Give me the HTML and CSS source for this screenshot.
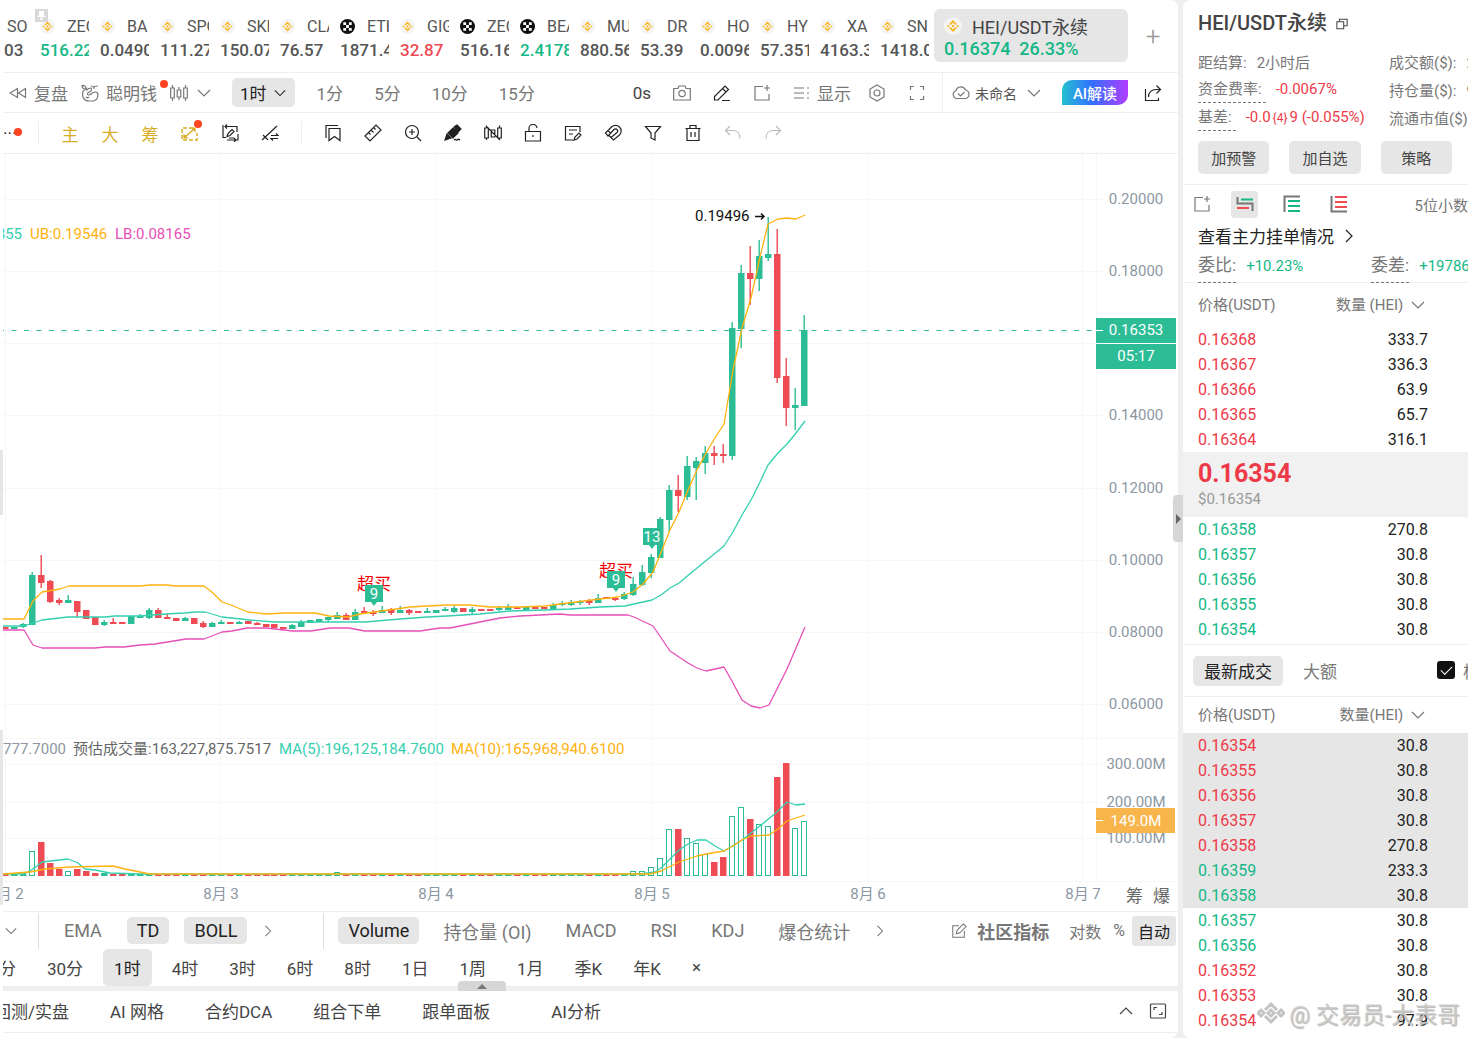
FILE: index.html
```html
<!DOCTYPE html>
<html lang="zh-CN">
<head>
    <meta charset="UTF-8">
    <meta name="viewport" content="width=device-width, initial-scale=1.0">
    <title>HEI/USDT永续</title>
    <link rel="stylesheet" href="styles.css">
</head>
<body>
    <svg class="sprite" aria-hidden="true">
        <symbol id="bnb" viewBox="0 0 16 16"><circle cx="8" cy="8" r="8" fill="#f4f4f4"/><path d="M5.3 6.6 8 3.9l2.7 2.7M5.3 9.4 8 12.1l2.7-2.7" fill="none" stroke="#f9b522" stroke-width="1.6"/><path d="m8 6.6 1.4 1.4L8 9.4 6.6 8zM3.8 6.8 5 8 3.8 9.2 2.6 8zM12.2 6.8 13.4 8l-1.2 1.2L11 8z" fill="#f9b522"/></symbol>
        <symbol id="okx" viewBox="0 0 16 16"><circle cx="8" cy="8" r="8" fill="#111"/><path d="M3.5 3.5h3v3h-3zM9.5 3.5h3v3h-3zM6.5 6.5h3v3h-3zM3.5 9.5h3v3h-3zM9.5 9.5h3v3h-3z" fill="#fff"/></symbol>
        <symbol id="pin" viewBox="0 0 13 13"><path d="M4 2h5v4l2 2H7.500v3h-2V8H2l2-2z" fill="#fff" stroke="none"/></symbol>
        <symbol id="chevron" viewBox="0 0 14 14"><path d="m1 4 6 6 6-6"/></symbol>
        <symbol id="next" viewBox="0 0 14 14"><path d="m4 1 6 6-6 6"/></symbol>
        <symbol id="rewind" viewBox="0 0 18 18"><path d="M8.500 4.500v9L1 9zM16.500 4.500v9L9.500 9z"/></symbol>
        <symbol id="whale" viewBox="0 0 18 18"><path d="M5 5c-3 1-4 4-3 8 1 3 3 4 6 4h4c3 0 5-3 5-6 0-2-1-3-3-3-3 0-4 3-6 3-2 0-2-2 0-3 2 0 3-2 2-4C8 4 7 4 6 6 5 3 4 1 1 1.500 1 3 2 5 5 5M13 5V4c0-1-1-2-3-2M13 4c0-1 1-2 4-2M5 13c1 1 2 1 3 0"/></symbol>
        <symbol id="candles" viewBox="0 0 18 18"><path d="M.7 4h3.600v10H.7zM7.200 6h3.600v7H7.200zM13.700 4h3.600v10h-3.600zM2.500 1v3M2.500 14v3M9 3v3M9 13v3M15.500 1v3M15.500 14v3"/></symbol>
        <symbol id="camera" viewBox="0 0 18 18"><path d="M.7 4.500H5l1-2.500h6l1 2.500h4.300v11.500H.7z"/><circle cx="9" cy="9.500" r="3.200"/></symbol>
        <symbol id="pen" viewBox="0 0 18 18"><path d="M1.500 16v-3.500L12 2l3.500 3.500L5 16zM9.500 4.500 13 8M9 16.500h8"/></symbol>
        <symbol id="addbox" viewBox="0 0 18 18"><path d="M10 2.500H2v13.500h14V10M14 1v6M11 4h6"/></symbol>
        <symbol id="list" viewBox="0 0 18 18"><path d="M1 4h10M1 9h10M1 14h10M14 4h2M14 9h2M14 14h2"/></symbol>
        <symbol id="hex" viewBox="0 0 18 18"><path d="m9 1 7 4v8l-7 4-7-4V5z"/><circle cx="9" cy="9" r="3"/></symbol>
        <symbol id="full" viewBox="0 0 18 18"><path d="M6 2.500H2.500V6M12 2.500h3.500V6M6 15.500H2.500V12M12 15.500h3.500V12"/></symbol>
        <symbol id="cloud" viewBox="0 0 18 18"><path d="M5 14.500a4 4 0 0 1-1-7.800 5 5 0 0 1 9.500-.7A4.300 4.300 0 0 1 13 14.500zM6 9.500l2.500 2.500 4-4"/></symbol>
        <symbol id="share" viewBox="0 0 18 18"><path d="M1.500 5v11.500h13V14M4.500 13c0-5 3-7.500 8-7.500h3.500M12.500 1.500l4 4-4 4"/></symbol>
        <symbol id="area" viewBox="0 0 18 18"><path d="M12 4H1v12h15V9" stroke-width="1.500" stroke-dasharray="4 2"/><path d="m4 13 9-8" stroke-width="1.500"/><path d="M11 4h3v3zM3 14v-3l3 3z" fill="currentColor"/></symbol>
        <symbol id="redo-doc" viewBox="0 0 18 18"><path d="M4 2.500h12V8M6 .5 4 2.500l2 2M2 1v12.500h3M6 16h11v-6M13 14l2 2-2 2M6 12.500l1-3 4-4 2 2-4 4zM8 14h5"/></symbol>
        <symbol id="trend" viewBox="0 0 18 18"><path d="m1 16 15-14M2 11l5 5M10 11.500h7l-2-2M17 14.500h-7l2 2"/></symbol>
        <symbol id="bookmark" viewBox="0 0 18 18"><path d="M5 4.500h11v12l-5.500-4-5.500 4zM2 14V1.500h12"/></symbol>
        <symbol id="ruler" viewBox="0 0 18 18"><path d="m1 12 11-11 5 5L6 17zM4.500 8.500l2 2M7 6l2.500 2.500M9.500 3.500l2 2"/></symbol>
        <symbol id="zoomin" viewBox="0 0 18 18"><circle cx="8" cy="8" r="6.500"/><path d="m13 13 4 4M5 8h6M8 5v6"/></symbol>
        <symbol id="marker" viewBox="0 0 18 18"><path d="m1 16 2-6 4 4zM4 9l5-5 5 5-5 5zM10 3l3-2 4 4-3 3z" fill="currentColor"/><path d="M10 16c2-2 2 1 3 0s2-1 3 0"/></symbol>
        <symbol id="nocandle" viewBox="0 0 18 18"><path d="M.7 4h3.600v10H.7zM7.200 6h3.600v7H7.200zM13.700 4h3.600v10h-3.600zM2.500 1.500V4M2.500 14v2M15.500 1.500V4M15.500 14v2M2 2l14 14"/></symbol>
        <symbol id="lock" viewBox="0 0 18 18"><path d="M1.500 7.500h15v9.500h-15zM5 7.500V5a4 4 0 0 1 8-1M9 11v2"/></symbol>
        <symbol id="note" viewBox="0 0 18 18"><path d="M16 8V2.500H1.500v13.500H9M5 6h8M5 10h4M10 16l1-3 4-4 2 2-4 4z"/></symbol>
        <symbol id="magnet" viewBox="0 0 18 18"><path d="m1.500 9 6-6a5.500 5.500 0 0 1 8 8l-6 5-2.500-2.500L13 8.500a2 2 0 0 0-3-3L4 12zM4 6.500l3 3M7 13.500l-2-2"/></symbol>
        <symbol id="filter" viewBox="0 0 18 18"><path d="M1.500 2.500h15L11 9v7l-4-2V9z"/></symbol>
        <symbol id="trash" viewBox="0 0 18 18"><path d="M1.500 4.500h15M6 4V1.500h6V4M3 4.500v12h12v-12M7 8v5M11 8v5"/></symbol>
        <symbol id="undo" viewBox="0 0 18 18"><path d="M6 2 1.500 6.500 6 11M1.500 6.500H9c5 0 7 4 7 8"/></symbol>
        <symbol id="edit" viewBox="0 0 18 18"><path d="M9 3H2v13h13V9M6 12l1-4 7-7 3 3-7 7z"/></symbol>
        <symbol id="expand" viewBox="0 0 18 18"><rect x="1.500" y="2" width="15" height="14" rx="1"/><path d="M5 8V5.500h3M13 10v2.500h-3"/></symbol>
        <symbol id="copy" viewBox="0 0 14 14"><path d="M1 4.500h8v8H1zM4 4V1.500h9V9H9"/></symbol>
        <symbol id="book-both" viewBox="0 0 18 18"><path d="M1.500 2v6.500h15V16" stroke="#777"/><path d="M5 4.500h12" stroke="#14b886"/><path d="M1 13h12" stroke="#ee4b55"/></symbol>
        <symbol id="book-buy" viewBox="0 0 18 18"><path d="M1.500 17V1.500H17" stroke="#777"/><path d="M5 6h12M5 11h12M5 16h12" stroke="#14b886"/></symbol>
        <symbol id="book-sell" viewBox="0 0 18 18"><path d="M1.500 1v15.500H17" stroke="#777"/><path d="M5 2h12M5 7h12M5 12h12" stroke="#ee4b55"/></symbol>
    </svg>

    <div class="workspace">
        <aside class="edge"><span class="edge-thumb"></span><span class="edge-thumb tall"></span></aside>

        <main class="main">
            <header class="tickers">
                <svg class="pin"><use href="#pin"/></svg>
                <div class="ticker-list" id="tickerList"></div>
                <div class="ticker-active">
                    <span class="ticker-head"><svg class="coin"><use href="#bnb"/></svg>HEI/USDT永续</span>
                    <span class="ticker-quote">0.16374&nbsp; 26.33%</span>
                </div>
                <button class="icon-btn add-tab" aria-label="添加">+</button>
            </header>

            <div class="toolbar">
                <button class="tool"><svg class="ic"><use href="#rewind"/></svg>复盘</button>
                <button class="tool"><svg class="ic"><use href="#whale"/></svg>聪明钱<i class="dot"></i></button>
                <button class="tool" aria-label="K线类型"><svg class="ic"><use href="#candles"/></svg><svg class="ic small"><use href="#chevron"/></svg></button>
                <button class="tool period">1时<svg class="ic tiny"><use href="#chevron"/></svg></button>
                <div class="quick">
                    <button>1分</button>
                    <button>5分</button>
                    <button>10分</button>
                    <button>15分</button>
                </div>
                <div class="toolbar-right">
                    <button class="dark">0s</button>
                    <button aria-label="截图"><svg class="ic"><use href="#camera"/></svg></button>
                    <button class="black" aria-label="画笔"><svg class="ic"><use href="#pen"/></svg></button>
                    <button aria-label="新增"><svg class="ic"><use href="#addbox"/></svg></button>
                    <button class="display"><svg class="ic"><use href="#list"/></svg>显示</button>
                    <button aria-label="设置"><svg class="ic"><use href="#hex"/></svg></button>
                    <button aria-label="全屏"><svg class="ic"><use href="#full"/></svg></button>
                </div>
                <div class="layout-tools">
                    <button class="layout-name"><svg class="ic"><use href="#cloud"/></svg><span>未命名</span><svg class="ic small"><use href="#chevron"/></svg></button>
                    <button class="ai">AI解读</button>
                    <button class="black" aria-label="分享"><svg class="ic"><use href="#share"/></svg></button>
                </div>
            </div>

            <div class="drawbar">
                <button class="more" aria-label="更多">···<i class="dot"></i></button>
                <div class="draw-group">
                    <button class="gold">主</button>
                    <button class="gold">大</button>
                    <button class="gold">筹</button>
                    <button class="gold" aria-label="区域"><svg class="ic"><use href="#area"/></svg><i class="dot"></i></button>
                    <button aria-label="同步画线"><svg class="ic"><use href="#redo-doc"/></svg></button>
                    <button aria-label="趋势线"><svg class="ic"><use href="#trend"/></svg></button>
                </div>
                <div class="draw-group">
                    <button aria-label="书签"><svg class="ic"><use href="#bookmark"/></svg></button>
                    <button aria-label="测量"><svg class="ic"><use href="#ruler"/></svg></button>
                    <button aria-label="放大"><svg class="ic"><use href="#zoomin"/></svg></button>
                    <button aria-label="标记"><svg class="ic"><use href="#marker"/></svg></button>
                    <button aria-label="隐藏K线"><svg class="ic"><use href="#nocandle"/></svg></button>
                    <button aria-label="锁定"><svg class="ic"><use href="#lock"/></svg></button>
                    <button aria-label="笔记"><svg class="ic"><use href="#note"/></svg></button>
                    <button aria-label="磁吸"><svg class="ic"><use href="#magnet"/></svg></button>
                    <button aria-label="筛选"><svg class="ic"><use href="#filter"/></svg></button>
                    <button aria-label="删除"><svg class="ic"><use href="#trash"/></svg></button>
                    <button class="off" aria-label="撤销"><svg class="ic"><use href="#undo"/></svg></button>
                    <button class="off" aria-label="重做"><svg class="ic flip"><use href="#undo"/></svg></button>
                </div>
            </div>

            <section class="chart">
                <svg id="chart" viewBox="3 154 1175 757" preserveAspectRatio="xMinYMin meet"></svg>
                <div class="axis-tools"><button>筹</button><button>爆</button></div>
            </section>

            <div class="indicators">
                <button class="fold" aria-label="收起"><svg class="ic tiny"><use href="#chevron"/></svg></button>
                <div class="ind-group main-ind">
                    <button>EMA</button>
                    <button class="on">TD</button>
                    <button class="on">BOLL</button>
                    <button class="nav" aria-label="更多主图指标"><svg class="ic tiny"><use href="#next"/></svg></button>
                </div>
                <div class="ind-group sub-ind">
                    <button class="on">Volume</button>
                    <button>持仓量 (OI)</button>
                    <button>MACD</button>
                    <button>RSI</button>
                    <button>KDJ</button>
                    <button>爆仓统计</button>
                    <button class="nav" aria-label="更多副图指标"><svg class="ic tiny"><use href="#next"/></svg></button>
                </div>
                <div class="scale-tools">
                    <button class="community"><svg class="ic"><use href="#edit"/></svg>社区指标</button>
                    <button>对数</button>
                    <button>%</button>
                    <button class="auto">自动</button>
                </div>
            </div>

            <div class="intervals">
                <button class="cut">15分</button>
                <button>30分</button>
                <button class="on">1时</button>
                <button>4时</button>
                <button>3时</button>
                <button>6时</button>
                <button>8时</button>
                <button>1日</button>
                <button>1周</button>
                <button>1月</button>
                <button>季K</button>
                <button>年K</button>
                <button aria-label="关闭">×</button>
            </div>

            <div class="splitter"><button class="pull" aria-label="展开面板"></button></div>

            <nav class="panels">
                <a class="cut" href="#">回测/实盘</a>
                <a href="#">AI 网格</a>
                <a href="#">合约DCA</a>
                <a href="#">组合下单</a>
                <a href="#">跟单面板</a>
                <a class="last" href="#">AI分析</a>
                <div class="panel-tools">
                    <button aria-label="展开"><svg class="ic small up"><use href="#chevron"/></svg></button>
                    <button aria-label="最大化"><svg class="ic"><use href="#expand"/></svg></button>
                </div>
            </nav>
        </main>

        <aside class="side">
            <button class="side-pull" aria-label="收起侧栏"></button>
            <div class="side-body">
                <h1>HEI/USDT永续 <svg class="ic tiny"><use href="#copy"/></svg></h1>
                <div class="info">
                    <p><span>距结算:</span><span>2小时后</span></p>
                    <p><span>成交额($):</span><span>2.1亿</span></p>
                    <p><span class="hint">资金费率:</span><span class="down">-0.0067%</span></p>
                    <p><span>持仓量($):</span><span>961万</span></p>
                    <p><span class="hint">基差:</span><span class="down">-0.0<small>{4}</small>9 (-0.055%)</span></p>
                    <p><span>流通市值($):</span></p>
                </div>
                <div class="actions">
                    <button>加预警</button>
                    <button>加自选</button>
                    <button>策略</button>
                </div>
                <div class="book-views">
                    <button aria-label="新窗口"><svg class="ic"><use href="#addbox"/></svg></button>
                    <button class="view on" aria-label="买卖盘"><svg class="ic thick"><use href="#book-both"/></svg></button>
                    <button class="view" aria-label="买盘"><svg class="ic thick"><use href="#book-buy"/></svg></button>
                    <button class="view" aria-label="卖盘"><svg class="ic thick"><use href="#book-sell"/></svg></button>
                    <button class="digits">5位小数</button>
                </div>
                <a class="orders-link" href="#">查看主力挂单情况<svg class="ic small"><use href="#next"/></svg></a>
                <div class="ratio">
                    <p><span class="hint">委比:</span><span class="up-text">+10.23%</span></p>
                    <p><span class="hint">委差:</span><span class="up-text">+19786</span></p>
                </div>

                <table class="book">
                    <thead><tr><th>价格(USDT)</th><th>数量 (HEI) <svg class="ic small"><use href="#chevron"/></svg></th></tr></thead>
                    <tbody id="asks"></tbody>
                </table>
                <div class="last-price"><strong>0.16354</strong><span>$0.16354</span></div>
                <table class="book bids"><tbody id="bids"></tbody></table>

                <div class="trade-tabs">
                    <button class="on">最新成交</button>
                    <button>大额</button>
                    <label><input type="checkbox" checked>极速</label>
                </div>
                <table class="book trades">
                    <thead><tr><th>价格(USDT)</th><th>数量(HEI) <svg class="ic small"><use href="#chevron"/></svg></th></tr></thead>
                    <tbody id="trades"></tbody>
                </table>
            </div>
            <div class="watermark"><svg viewBox="0 0 28 28"><path d="M8 11l6-6 6 6M8 17l6 6 6-6M14 11l3 3-3 3-3-3zM4 11l3 3-3 3-3-3zM24 11l3 3-3 3-3-3z"/></svg><span>@ 交易员-大表哥</span></div>
        </aside>
    </div>
    <script src="chart.js"></script>
</body>
</html>
```
FILE: styles.css
```css
* {
    box-sizing: border-box;
}
body {
    margin: 0;
    background: #efefef;
    color: #777;
    font-family: Roboto, "Noto Sans CJK SC", sans-serif;
    font-size: 17px;
}
button {
    border: 0;
    padding: 0;
    background: none;
    color: inherit;
    font: inherit;
    white-space: nowrap;
    cursor: pointer;
}
a {
    color: inherit;
    text-decoration: none;
}
p {
    margin: 0;
}
.sprite {
    position: absolute;
    width: 0;
    height: 0;
}
.ic {
    width: 18px;
    height: 18px;
    flex: none;
    fill: none;
    stroke: currentColor;
    stroke-width: 1.2;
}
.ic.small {
    width: 14px;
    height: 14px;
}
.ic.tiny {
    width: 12px;
    height: 12px;
}
.ic.thick {
    stroke-width: 2;
}
.ic.flip {
    transform: scaleX(-1);
}
.ic.up {
    transform: rotate(180deg);
}
.dot {
    position: absolute;
    width: 8px;
    height: 8px;
    border-radius: 50%;
    background: #ff4422;
}

/* page frame */
.workspace {
    display: flex;
    min-height: 100vh;
    overflow: hidden;
}
.edge {
    flex: 0 0 3px;
    padding-top: 450px;
    background: #fff;
}
.edge-thumb {
    display: block;
    height: 65px;
    background: #e6e6e6;
}
.edge-thumb.tall {
    height: 175px;
    margin-top: 215px;
}
.main {
    position: relative;
    flex: 1;
    min-width: 0;
    background: #fff;
    border-radius: 0 8px 8px 0;
    overflow: hidden;
}

/* tickers */
.tickers {
    display: flex;
    align-items: center;
    height: 73px;
    border-bottom: 1px solid #efefef;
}
.pin {
    position: absolute;
    top: 9px;
    left: 32px;
    width: 13px;
    height: 13px;
    background: #d8d8d8;
}
.ticker-list {
    display: flex;
    flex: 1;
    justify-content: flex-end;
    gap: 11px;
    min-width: 0;
    margin-right: 5px;
    padding-top: 4px;
    overflow: hidden;
}
.ticker {
    flex: 0 0 49px;
    overflow: hidden;
    white-space: nowrap;
    color: #555;
}
.ticker-head {
    display: flex;
    align-items: center;
    gap: 12px;
    height: 24px;
    font-size: 16px;
}
.ticker .coin {
    width: 15px;
    height: 15px;
    flex: none;
}
.ticker-price {
    font-size: 17px;
    font-weight: 500;
    line-height: 24px;
}
.ticker-price.up-text {
    color: #14b886;
}
.ticker-price.down {
    color: #ee4b55;
}
.ticker-active {
    width: 194px;
    height: 53px;
    padding: 5px 10px;
    margin-bottom: 2px;
    border-radius: 6px;
    background: #e6e6e6;
    color: #444;
}
.ticker-active .ticker-head {
    gap: 10px;
    font-size: 18px;
}
.ticker-active .coin {
    width: 18px;
    height: 18px;
}
.ticker-quote {
    color: #14b886;
    font-size: 18px;
    font-weight: 500;
}
.add-tab {
    width: 50px;
    color: #999;
    font-size: 26px;
    font-weight: 300;
}
.up-text {
    color: #14b886;
}
.down {
    color: #ee3a48;
}

/* toolbar */
.toolbar {
    display: flex;
    align-items: center;
    height: 40px;
    padding-left: 6px;
    border-bottom: 1px solid #efefef;
}
.tool {
    position: relative;
    display: flex;
    align-items: center;
    gap: 7px;
    margin-right: 13px;
}
.tool .dot {
    top: 0;
    right: -11px;
}
.tool[aria-label] {
    gap: 9px;
    margin-right: 21px;
}
.tool.period {
    height: 29px;
    padding: 0 9px 0 8px;
    border-radius: 5px;
    background: #e6e6e6;
    color: #222;
    margin-right: 22px;
}
.quick {
    display: flex;
    gap: 31px;
}
.toolbar-right {
    display: flex;
    align-items: center;
    gap: 22px;
    margin-left: auto;
    padding-right: 16px;
}
.toolbar-right button,
.layout-tools button {
    display: flex;
    align-items: center;
}
.toolbar-right .display {
    gap: 6px;
    margin-right: -5px;
}
.dark {
    color: #444;
}
.toolbar .black {
    color: #222;
}
.layout-tools {
    display: flex;
    align-items: center;
    gap: 16px;
    height: 39px;
    padding: 0 16px 0 9px;
    border-left: 1px solid #efefef;
}
.layout-name {
    gap: 5px;
    margin-right: 5px;
    font-size: 14px;
}
.layout-name span {
    margin-right: 5px;
    color: #555;
}
.layout-tools .ai {
    justify-content: center;
    width: 66px;
    height: 25px;
    border-radius: 10px 0 10px 0;
    background: linear-gradient(90deg, #24c0d0, #3370ff 45%, #b03cff);
    color: #fff;
    font-size: 15px;
    font-weight: 500;
}

/* drawing tools */
.drawbar {
    display: flex;
    align-items: center;
    height: 41px;
    border-bottom: 1px solid #efefef;
    color: #222;
}
.drawbar button {
    position: relative;
    display: flex;
    align-items: center;
    justify-content: center;
    width: 40px;
    height: 24px;
}
.drawbar .more {
    justify-content: flex-start;
    width: 35px;
}
.more .dot {
    top: 7px;
    left: 11px;
}
.draw-group {
    display: flex;
    padding: 0 11px;
    border-left: 1px solid #eee;
}
.drawbar .gold {
    color: #d8ad25;
}
.gold .dot {
    top: -1px;
    right: 8px;
}
.drawbar .off {
    color: #bbb;
}

/* chart */
.chart {
    position: relative;
}
.chart > svg {
    display: block;
    width: 100%;
}
.chart text {
    font-size: 15px;
}
.grid {
    stroke: #f6f7f7;
}
.line {
    fill: none;
    stroke-width: 1.3;
    stroke-linejoin: round;
}
.axis-text {
    fill: #8c97a3;
}
.chart .signal {
    fill: #f50000;
    font-size: 17px;
}
.axis-tools {
    position: absolute;
    right: 8px;
    bottom: 4px;
    display: flex;
    gap: 10px;
    color: #666;
}

/* indicator rows */
.indicators {
    display: flex;
    align-items: center;
    height: 38px;
    border-top: 1px solid #efefef;
    font-size: 18px;
}
.fold {
    width: 35px;
    padding-left: 2px;
    text-align: left;
}
.ind-group {
    display: flex;
    align-items: center;
    gap: 15px;
    height: 36px;
    padding-left: 15px;
    border-left: 1px solid #ddd;
}
.main-ind {
    padding-right: 49px;
}
.sub-ind {
    gap: 14px;
    padding-left: 14px;
}
.ind-group button {
    height: 27px;
    padding: 0 10px;
    border-radius: 5px;
}
.ind-group .nav {
    padding: 0;
}
.ind-group .on,
.intervals .on,
.trade-tabs .on {
    background: #e6e6e6;
    color: #222;
}
.scale-tools {
    display: flex;
    align-items: center;
    gap: 12px;
    margin-left: auto;
    padding-right: 2px;
    font-size: 16px;
}
.community {
    display: flex;
    align-items: center;
    gap: 10px;
    margin-right: 8px;
    font-size: 18px;
    font-weight: 700;
}
.community .ic {
    width: 16px;
    height: 16px;
}
.auto {
    height: 30px;
    padding: 0 6px;
    margin-left: -5px;
    border-radius: 3px;
    background: #e6e6e6;
    color: #222;
}
.intervals {
    display: flex;
    gap: 9px;
    height: 37px;
    color: #444;
}
.intervals button {
    padding: 0 11px 1px;
    border-radius: 5px;
}
.intervals .cut {
    display: flex;
    align-items: center;
    justify-content: flex-end;
    width: 24px;
}
.splitter {
    position: relative;
    height: 5px;
    background: #efefef;
}
.pull {
    position: absolute;
    left: calc(50% - 133px);
    bottom: 0;
    width: 48px;
    height: 10px;
    border-radius: 4px 4px 0 0;
    background: #d6d6d6;
}
.pull::after {
    content: "";
    display: block;
    width: 0;
    margin: 0 auto;
    border: 5px solid transparent;
    border-top: 0;
    border-bottom-color: #777;
}
.panels {
    display: flex;
    align-items: center;
    gap: 41px;
    height: 42px;
    padding-bottom: 2px;
    border-bottom: 1px solid #efefef;
    color: #444;
    white-space: nowrap;
}
.panels .cut {
    display: flex;
    justify-content: flex-end;
    width: 66px;
    overflow: hidden;
}
.panels .last {
    margin-left: 20px;
}
.panel-tools {
    display: flex;
    gap: 16px;
    align-items: center;
    margin-left: auto;
    padding-right: 11px;
}
.panel-tools button {
    display: flex;
}

/* right column */
.side {
    position: relative;
    flex: 0 0 285px;
    min-width: 0;
    margin-left: 5px;
    font-size: 15px;
}
.side-body {
    min-height: 100%;
    overflow: hidden;
    background: #fff;
    border-radius: 8px 0 0 8px;
}
.side-pull {
    position: absolute;
    top: 495px;
    left: -10px;
    width: 10px;
    height: 47px;
    border-radius: 4px 0 0 4px;
    background: #d6d6d6;
}
.side-pull::after {
    content: "";
    display: block;
    width: 0;
    margin-left: 3px;
    border: 5px solid transparent;
    border-right: 0;
    border-left-color: #666;
}
.side h1 {
    margin: 0;
    padding-left: 15px;
    color: #444;
    font-size: 20px;
    font-weight: 500;
    line-height: 47px;
}
.side h1 .ic {
    margin-left: 4px;
}
.info {
    display: grid;
    grid-template-columns: 191px 1fr;
    padding-left: 15px;
    white-space: nowrap;
}
.info p,
.ratio p {
    display: flex;
    align-items: center;
    gap: 10px;
    min-width: 0;
    height: 28px;
}
.info small {
    padding: 0 2px;
    font-size: 12px;
}
.hint {
    line-height: 26px;
    border-bottom: 1px dashed #777;
}
.info .hint {
    padding-right: 4px;
}
.actions {
    display: flex;
    gap: 20px;
    padding: 10px 16px 10px 15px;
    border-bottom: 1px solid #efefef;
}
.actions button {
    flex: 1;
    height: 33px;
    border-radius: 5px;
    background: #e6e6e6;
    color: #444;
}
.book-views {
    display: flex;
    align-items: center;
    gap: 20px;
    height: 38px;
    padding-left: 10px;
    overflow: hidden;
}
.book-views button {
    display: flex;
    align-items: center;
    justify-content: center;
}
.view {
    width: 27px;
    height: 27px;
    border-radius: 4px;
}
.view.on {
    background: #e6e6e6;
}
.book-views .digits {
    margin-left: auto;
}
.orders-link {
    display: flex;
    align-items: center;
    gap: 8px;
    height: 25px;
    padding-left: 15px;
    color: #222;
    font-size: 17px;
}
.ratio {
    display: grid;
    grid-template-columns: 173px 1fr;
    height: 35px;
    padding-left: 15px;
    border-bottom: 1px solid #efefef;
    white-space: nowrap;
}
.ratio p {
    height: 35px;
}
.ratio .hint {
    font-size: 17px;
    line-height: 34px;
}
.book {
    width: 100%;
    border-collapse: collapse;
    font-size: 16px;
}
.book th {
    height: 44px;
    padding: 0 0 3px 15px;
    font-size: 15px;
    font-weight: 400;
    text-align: left;
}
.book th:last-child,
.book td:last-child {
    padding-left: 0;
    padding-right: 40px;
    text-align: right;
    color: #222;
}
.book th:last-child {
    padding-right: 43px;
    color: inherit;
}
.book th .ic {
    margin-left: 4px;
    vertical-align: -2px;
}
.book td {
    height: 25px;
    padding: 0 0 0 15px;
}
.last-price {
    height: 65px;
    padding: 6px 15px;
    background: #f1f1f1;
}
.last-price strong {
    display: block;
    color: #ee3a48;
    font-size: 25px;
    font-weight: 700;
    line-height: 32px;
}
.last-price span {
    color: #999;
}
.bids {
    margin-bottom: 2px;
}
.trade-tabs {
    display: flex;
    align-items: center;
    gap: 20px;
    height: 53px;
    padding-left: 10px;
    border-top: 1px solid #efefef;
    border-bottom: 1px solid #efefef;
    font-size: 17px;
}
.trade-tabs .on {
    height: 30px;
    padding: 0 11px;
    border-radius: 5px;
}
.trade-tabs label {
    display: flex;
    gap: 8px;
    width: 31px;
    margin-left: auto;
    overflow: hidden;
    white-space: nowrap;
}
.trade-tabs input {
    appearance: none;
    flex: none;
    width: 18px;
    height: 18px;
    margin: 3px 0;
    border-radius: 3px;
    background: #111;
}
.trade-tabs input::after {
    content: "";
    display: block;
    width: 10px;
    height: 5px;
    margin: 5px 4px;
    border: solid #fff;
    border-width: 0 0 1px 1px;
    transform: rotate(-45deg);
}
.trades th {
    height: 36px;
}
.trades .recent {
    background: #e6e6e6;
}
.watermark {
    position: absolute;
    right: 8px;
    bottom: 8px;
    display: flex;
    align-items: center;
    gap: 4px;
    color: rgba(200, 200, 200, 0.85);
    font-size: 23px;
    text-shadow: 1px 1px 1px rgba(110, 110, 110, 0.5);
    white-space: nowrap;
    pointer-events: none;
}
.watermark svg {
    width: 28px;
    height: 28px;
    fill: none;
    stroke: #c4c4c4;
    stroke-width: 3;
}
```
FILE: chart.js
```js
var GREEN = '#2dbd96';
var RED = '#ee4b55';
var TEAL = '#33cfb0';
var GOLD = '#ffb20f';
var PINK = '#e650b8';
var STEP = 8.973;
var VOLUME_BASE = 875;

// [direction, body top, body bottom, wick top, wick bottom]
var candles = [
    ['d', 627, 629], ['u', 627, 629], ['u', 624, 627, 623, 628], ['u', 575, 625, 572, 625], ['d', 575, 583, 555, 588],
    ['d', 581, 602, 580, 603], ['d', 600, 603, 598, 605], ['u', 600, 603, 595, 603], ['d', 601, 612, 601, 617], ['d', 610, 619],
    ['d', 617, 625], ['u', 622, 625, 620, 626], ['d', 622, 624, 618, 624], ['d', 622, 624], ['u', 616, 624],
    ['u', 616, 618, 614, 618], ['u', 610, 618, 608, 619], ['d', 610, 618, 608, 618], ['d', 617, 619, 614, 619], ['d', 618, 621],
    ['u', 618, 621, 617, 621], ['d', 618, 624], ['d', 623, 627, 621, 628], ['u', 623, 627, 622, 627], ['u', 622, 624, 620, 624],
    ['d', 622, 624], ['u', 622, 624, 621, 624], ['d', 621, 624], ['d', 623, 625, 622, 625], ['d', 624, 627],
    ['d', 624, 628], ['d', 627, 629], ['u', 625, 629, 624, 629], ['u', 622, 627, 620, 627], ['u', 620, 623],
    ['u', 619, 622], ['u', 617, 620, 617, 622], ['u', 615, 619, 612, 619], ['d', 615, 620, 613, 620], ['u', 612, 620, 609, 620],
    ['d', 611, 613, 607, 613], ['d', 612, 614, 610, 616], ['u', 610, 613, 606, 613], ['d', 609, 613, 608, 615], ['u', 610, 613, 606, 613],
    ['d', 610, 613, 609, 615], ['d', 611, 613], ['u', 611, 613, 608, 613], ['u', 610, 613], ['u', 609, 611, 607, 611],
    ['u', 608, 612, 606, 613], ['d', 608, 612], ['u', 609, 612, 607, 614], ['d', 609, 611], ['d', 609, 611],
    ['u', 608, 610, 606, 611], ['u', 607, 610, 604, 610], ['d', 607, 609], ['u', 607, 610], ['d', 607, 609],
    ['d', 607, 609], ['u', 605, 609, 603, 609], ['u', 603, 605, 601, 606], ['u', 602, 605, 600, 606], ['u', 601, 603, 600, 605],
    ['d', 600, 603, 599, 605], ['u', 598, 603, 594, 603], ['d', 597, 599], ['d', 598, 600, 597, 601], ['u', 594, 599, 592, 600],
    ['u', 584, 595, 577, 596], ['u', 572, 585, 565, 586], ['u', 557, 573, 554, 578], ['u', 519, 558, 517, 558], ['u', 490, 520, 485, 532],
    ['d', 490, 496, 475, 512], ['u', 466, 497, 456, 500], ['u', 461, 468, 457, 500], ['u', 453, 463, 446, 474], ['d', 453, 456, 446, 465],
    ['d', 454, 456, 444, 463], ['u', 328, 456, 322, 460], ['u', 273, 329, 265, 348], ['d', 273, 279, 246, 305], ['u', 256, 279, 240, 291],
    ['u', 254, 258, 217, 261], ['d', 254, 378, 229, 383], ['d', 376, 408, 358, 426], ['u', 405, 408, 388, 430], ['u', 330, 406, 315, 406]
];

// volume bar tops, everything missing is a flat bar
var volumes = {
    3: 851, 4: 842, 5: 863, 6: 869, 7: 871, 8: 869, 9: 871, 10: 873, 11: 873, 37: 872,
    70: 871, 71: 871, 72: 867, 73: 858, 74: 829, 75: 829, 76: 838, 77: 843, 78: 854, 79: 862,
    80: 857, 81: 816, 82: 807, 83: 819, 84: 824, 85: 826, 86: 777, 87: 763, 88: 828, 89: 821
};

var lines = [
    [GOLD, '3,619 24,619 33,601 42,592 60,589 69,586 140,586 150,585 167,585 176,586 204,586 213,593 222,602 231,605 248,612 266,614 284,613 315,613 329,616 348,617 360,614 374,612 396,609 410,607 427,606 447,605 470,605 490,607 520,607 545,606 560,604 600,599 618,597 633,592 643,584 653,572 662,550 670,530 679,512 688,490 697,470 706,453 715,438 724,424 733,370 742,328 751,298 760,257 768,224 778,219 787,218 796,219 805,215'],
    [TEAL, '3,626 24,626 33,623 42,620 68,617 105,617 115,616 140,616 165,614 185,613 195,612 205,612 222,617 250,620 275,622 365,622 400,619 427,617 447,616 480,614 510,611 545,610 570,609 600,607 625,606 652,600 661,595 670,588 679,583 697,568 724,546 733,532 742,515 751,500 760,482 768,465 778,453 787,444 796,433 805,421'],
    [PINK, '3,630 24,630 33,645 42,648 95,648 105,647 124,647 140,645 155,644 186,639 204,639 222,632 232,631 247,628 266,628 293,631 311,631 330,628 349,628 365,631 420,631 440,628 450,628 470,624 500,618 520,616 560,614 570,615 628,615 634,617 653,626 670,651 688,663 697,668 706,671 724,667 733,683 742,700 751,706 760,708 769,705 787,669 796,648 805,627'],
    [TEAL, '3,874 24,874 33,869 42,862 68,859 78,863 85,869 95,870 110,873 140,874 640,874 655,872 661,868 670,859 679,850 688,844 697,840 706,840 715,846 724,851 742,840 760,826 778,811 787,802 796,805 805,804'],
    [GOLD, '3,874 30,872 45,869 70,867 113,866 125,869 150,874 650,874 661,871 679,862 697,856 706,854 724,851 733,846 742,840 751,836 769,835 778,829 787,821 805,815']
];

function rect(x, y, w, h, fill, extra) {
    return '<rect x="' + x + '" y="' + y + '" width="' + w + '" height="' + h + '" fill="' + fill + '" ' + (extra || '') + '/>';
}

function text(x, y, str, attrs) {
    return '<text x="' + x + '" y="' + y + '" ' + attrs + '>' + str + '</text>';
}

function gridLine(x1, y1, x2, y2) {
    return '<line class="grid" x1="' + x1 + '" y1="' + y1 + '" x2="' + x2 + '" y2="' + y2 + '"/>';
}

function flag(x, y, label) {
    return '<path d="M' + (x - 9) + ' ' + y + 'h18v17h-6l-3 4-3-4h-6z" fill="' + GREEN + '"/>' +
        text(x, y + 14, label, 'fill="#fff" text-anchor="middle"');
}

function drawChart() {
    var out = '';
    var i;
    var prices = ['0.20000', '0.18000', '', '0.14000', '0.12000', '0.10000', '0.08000', '0.06000'];
    var priceY = [199, 271, 343, 415, 488, 560, 632, 704];
    for (i = 0; i < prices.length; i++) {
        out += gridLine(3, priceY[i] + 0.5, 1103, priceY[i] + 0.5);
        out += text(1136, priceY[i] + 5, prices[i], 'class="axis-text" text-anchor="middle"');
    }
    [['300.00M', 764], ['200.00M', 802], ['100.00M', 838]].forEach(function (row) {
        out += gridLine(3, row[1] + 0.5, 1103, row[1] + 0.5);
        out += text(1136, row[1] + 5, row[0], 'class="axis-text" text-anchor="middle"');
    });
    out += gridLine(3, 738.5, 1176, 738.5) + gridLine(3, 881.5, 1176, 881.5);
    [5, 220, 435, 651, 867, 1082].forEach(function (x, n) {
        out += gridLine(x + 0.5, 154, x + 0.5, 881);
        out += text(x + 1, 899, '8月 ' + (n + 2), 'class="axis-text" text-anchor="middle"');
    });
    out += gridLine(1096.5, 154, 1096.5, 881);

    out += text(22, 239, 'BOLL:0.13855', 'fill="' + TEAL + '" text-anchor="end"');
    out += text(30, 239, 'UB:0.19546', 'fill="' + GOLD + '"');
    out += text(115, 239, 'LB:0.08165', 'fill="' + PINK + '"');
    out += text(66, 754, '149,012,777.7000', 'class="axis-text" text-anchor="end"');
    out += text(73, 754, '预估成交量:163,227,875.7517', 'fill="#666"');
    out += text(279, 754, 'MA(5):196,125,184.7600', 'fill="' + TEAL + '"');
    out += text(451, 754, 'MA(10):165,968,940.6100', 'fill="' + GOLD + '"');

    candles.forEach(function (c, n) {
        var x = Math.round(5.3 + n * STEP);
        var up = c[0] === 'u';
        var color = up ? GREEN : RED;
        var top = volumes[n] || 874;
        if (c.length > 3) {
            out += rect(x - 0.5, c[3], 1.4, c[4] - c[3], color);
        }
        out += rect(x - 3, c[1], 6.5, c[2] - c[1], color);
        if (up && top < 873) {
            out += rect(x - 2.5, top + 0.5, 5, VOLUME_BASE - top, '#fff', 'stroke="' + GREEN + '"');
        } else {
            out += rect(x - 3, top, 6.5, VOLUME_BASE + 1 - top, color);
        }
    });
    out += text(374, 590, '超买', 'class="signal" text-anchor="middle"') + flag(374, 585, '9');
    out += text(616, 577, '超买', 'class="signal" text-anchor="middle"') + flag(616, 571, '9');
    out += flag(652, 528, '13');
    lines.forEach(function (l) {
        out += '<polyline class="line" stroke="' + l[0] + '" points="' + l[1] + '"/>';
    });

    out += text(695, 221, '0.19496', 'fill="#111"');
    out += '<path d="M755 216.500h9M761 213.500l3 3-3 3" fill="none" stroke="#111" stroke-width="1.500"/>';
    out += '<line x1="-1" y1="330.500" x2="1096" y2="330.500" stroke="' + GREEN + '" stroke-dasharray="5 7.500"/>';
    out += rect(1096, 318, 80, 25, GREEN) + rect(1096, 344, 80, 25, GREEN) + rect(1096, 330, 7, 1, '#fff');
    out += text(1136, 335, '0.16353', 'fill="#fff" text-anchor="middle"');
    out += text(1136, 361, '05:17', 'fill="#fff" text-anchor="middle"');
    out += rect(1096, 808, 79, 25, '#f7b54c') + rect(1096, 820, 7, 1, '#fff');
    out += text(1136, 826, '149.0M', 'fill="#fff" text-anchor="middle"');
    document.getElementById('chart').innerHTML = out;
}

// name, price, exchange icon, colour class
var tickers = [
    ['SO', '77.03', 'bnb'], ['ZEC', '516.22', 'bnb', 'up-text'], ['BA', '0.0490', 'bnb'], ['SPC', '111.27', 'bnb'],
    ['SKH', '150.07', 'bnb'], ['CLA', '76.57', 'bnb'], ['ETH', '1871.4', 'okx'], ['GIG', '32.87', 'bnb', 'down'],
    ['ZEC', '516.16', 'okx'], ['BEA', '2.4178', 'okx', 'up-text'], ['MU', '880.56', 'bnb'], ['DR', '53.39', 'bnb'],
    ['HO', '0.0096', 'bnb'], ['HY', '57.351', 'bnb'], ['XA', '4163.3', 'bnb'], ['SN', '1418.0', 'bnb']
];

var asks = [['0.16368', '333.7'], ['0.16367', '336.3'], ['0.16366', '63.9'], ['0.16365', '65.7'], ['0.16364', '316.1']];
var bids = [['0.16358', '270.8'], ['0.16357', '30.8'], ['0.16356', '30.8'], ['0.16355', '30.8'], ['0.16354', '30.8']];
var trades = [
    ['0.16354', '30.8', 'down'], ['0.16355', '30.8', 'down'], ['0.16356', '30.8', 'down'], ['0.16357', '30.8', 'down'],
    ['0.16358', '270.8', 'down'], ['0.16359', '233.3', 'up-text'], ['0.16358', '30.8', 'up-text'], ['0.16357', '30.8', 'up-text'],
    ['0.16356', '30.8', 'up-text'], ['0.16352', '30.8', 'down'], ['0.16353', '30.8', 'down'], ['0.16354', '97.9', 'down']
];

function fillRows(id, rows, cls, recent) {
    document.getElementById(id).innerHTML = rows.map(function (r, n) {
        return '<tr class="' + (n < recent ? 'recent' : '') + '"><td class="' + (r[2] || cls) + '">' + r[0] + '</td><td>' + r[1] + '</td></tr>';
    }).join('');
}

document.getElementById('tickerList').innerHTML = tickers.map(function (t) {
    return '<div class="ticker"><div class="ticker-head"><svg class="coin"><use href="#' + t[2] + '"/></svg>' + t[0] +
        '</div><div class="ticker-price ' + (t[3] || '') + '">' + t[1] + '</div></div>';
}).join('');
drawChart();
fillRows('asks', asks, 'down', 0);
fillRows('bids', bids, 'up-text', 0);
fillRows('trades', trades, '', 7);
```
